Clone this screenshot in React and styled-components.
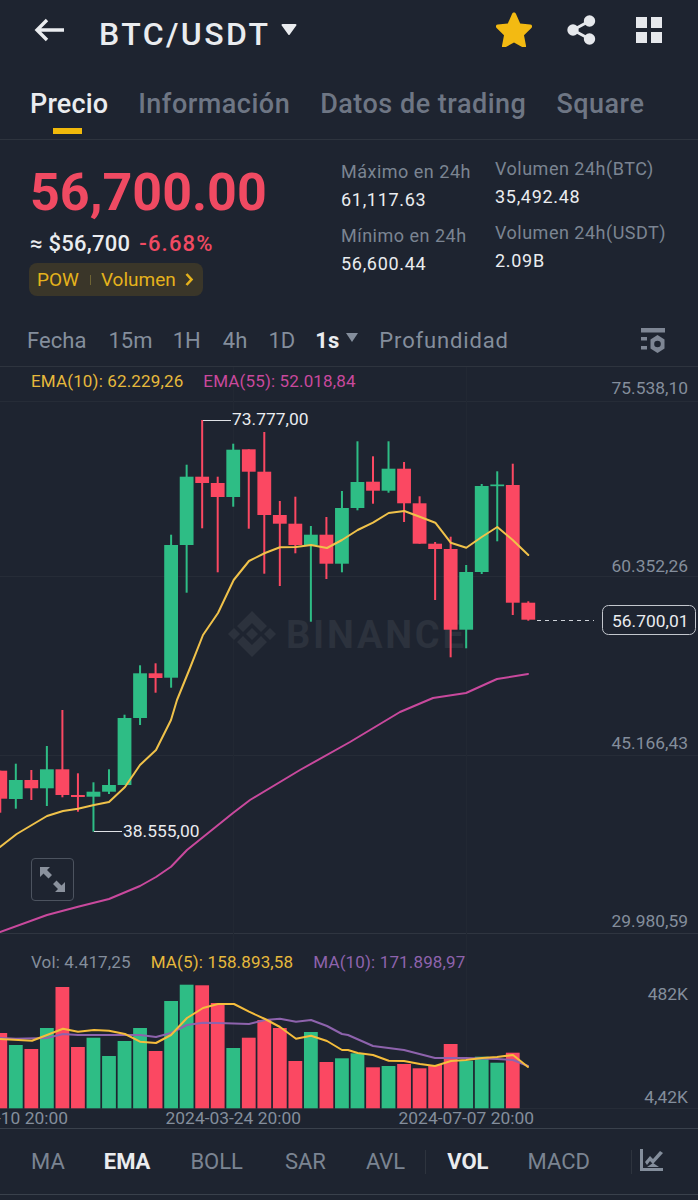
import React from "react";
import styled, { createGlobalStyle } from "styled-components";

const Global = createGlobalStyle`
  html, body { margin: 0; padding: 0; background: #1e2430; }
  * { box-sizing: border-box; }
`;

const GREEN = "#2ebd85";
const RED = "#fb4862";
const YELLOW = "#f0b90b";
const GRAY = "#848e9c";
const BG = "#1e2430";

const Page = styled.div`
  width: 698px; height: 1200px; overflow: hidden; background: ${BG};
  font-family: Roboto, "Noto Sans", sans-serif; color: #eaecef;
  display: flex; flex-direction: column;
`;
const Header = styled.header`
  height: 68px; display: flex; align-items: flex-start; padding: 12px 35px 0 34px;
`;
const BackIcon = styled.svg`width: 30px; height: 24px; margin-top: 6px; margin-right: 35px; flex: none;`;
const Pair = styled.div`
  font-size: 32px; font-weight: 500; letter-spacing: 2.4px; line-height: 42px; margin-top: 1px; color: #eaecef;
`;
const TitleCaret = styled.svg`width: 16px; height: 11px; margin: 12px 0 0 11px; flex: none;`;
const HeaderActions = styled.div`margin-left: auto; display: flex; align-items: flex-start;`;
const StarIcon = styled.svg`width: 36px; height: 35px; flex: none; margin-right: 35px;`;
const ShareIcon = styled.svg`width: 29px; height: 30px; margin-top: 3px; margin-right: 40px; flex: none;`;
const GridIcon = styled.svg`width: 26px; height: 26px; margin-top: 5px; margin-right: 1px; flex: none;`;

const Tabs = styled.nav`
  height: 72px; padding: 1px 0 0 30px; display: flex; gap: 30px;
  border-bottom: 1px solid #2e343e;
  width: 100%;
`;
const Tab = styled.div`
  font-size: 27px; font-weight: 500; line-height: 70px; letter-spacing: ${p => p.$active ? 0.15 : 0.5}px;
  color: ${p => p.$active ? "#eaecef" : "#6e7684"};
  position: relative;
  ${p => p.$active ? `&::after { content: ""; position: absolute; left: 23px; width: 29px; height: 6px; top: 59px; background: ${YELLOW}; }` : ""}
`;

const Summary = styled.section`
  height: 178px; display: flex; padding: 0 0 0 30px;
`;
const PriceBlock = styled.div`width: 311px; flex: none; display: flex; flex-direction: column;`;
const BigPrice = styled.div`
  font-size: 52px; font-weight: 700; line-height: 60px; margin-top: 23px; color: #f04a62; letter-spacing: 0;
`;
const Sub = styled.div`display: flex; gap: 9px; align-items: baseline; margin-top: 7px; line-height: 28px;`;
const Approx = styled.span`font-size: 22px; font-weight: 500; color: #eaecef; letter-spacing: 0.25px;`;
const Change = styled.span`font-size: 22px; font-weight: 500; color: #f04a62; letter-spacing: 1.2px;`;
const Chip = styled.div`
  margin-top: 5px; margin-left: -1px; width: 174px; height: 33px; background: #3a3629; border-radius: 8px;
  display: flex; align-items: center; padding-left: 8px; color: #e5b21c; font-size: 19px;
`;
const ChipSep = styled.i`width: 1px; height: 10px; background: #6f6434; margin: 0 10px 0 11px;`;
const Chevron = styled.svg`width: 9px; height: 13px; margin-left: 9px;`;
const StatCol = styled.div`
  width: ${p => p.$w}px; flex: none; padding-top: ${p => p.$top}px; display: grid; row-gap: 13px; align-content: start;
`;
const Stat = styled.div`display: flex; flex-direction: column; gap: 5px;`;
const StatLabel = styled.div`font-size: 18px; line-height: 23px; color: #7b8492; white-space: nowrap; letter-spacing: 0.5px;`;
const StatValue = styled.div`font-size: 18px; line-height: 23px; color: #eaecef; letter-spacing: 0.7px;`;

const Periods = styled.div`
  height: 49px; flex: none; display: flex; align-items: center; padding: 0 33px 3px 27px;
  border-bottom: 1px solid #2e343e;
`;
const Period = styled.div`
  font-size: 22px; margin-right: ${p => p.$gap}px; color: ${p => p.$active ? "#eaecef" : "#848e9c"};
  font-weight: ${p => p.$active ? 700 : 400}; letter-spacing: ${p => p.$ls || 0.05}px;
`;
const PeriodCaret = styled.svg`width: 12px; height: 9px; margin: -6px 21px 0 -14px;`;
const SettingsIcon = styled.svg`width: 24px; height: 25px; margin-left: auto;`;

const ChartArea = styled.div`position: relative; height: 762px; flex: none; border-bottom: 1px solid #3a414c;`;
const ChartSvg = styled.svg`display: block; width: 698px; height: 761px;`;
const Legend = styled.div`
  position: absolute; left: 31px; top: ${p => p.$top}px; display: flex; gap: 20px;
  font-size: 17px; line-height: 20px; letter-spacing: 0.15px;
`;
const LegendItem = styled.span`color: ${p => p.$c};`;

const ExpandButton = styled.div`
  position: absolute; left: 31px; top: 491px; width: 43px; height: 43px;
  border: 1px solid #4c535f; border-radius: 4px; display: flex; align-items: center; justify-content: center;
`;
const ExpandIcon = styled.svg`width: 27px; height: 27px;`;

const Indicators = styled.div`
  height: 66px; flex: none; display: flex; align-items: center; border-bottom: 1px solid #3a414c;
  padding-left: 31px; font-size: 22px;
`;
const Ind = styled.div`
  color: ${p => p.$active ? "#eaecef" : "#7b8492"};
  font-weight: ${p => p.$active ? 700 : 400};
  margin-right: ${p => p.$gap}px; white-space: nowrap;
`;
const IndSep = styled.i`width: 1px; height: 24px; background: #2e343e; margin-right: ${p => p.$gap}px;`;
const ChartTypeIcon = styled.svg`width: 23px; height: 22px; margin-top: -3px;`;

const Labels = styled.g`font-family: Roboto, sans-serif;`;

const X = i => 528.3 - 15.53 * (34 - i);
/* [isGreen, bodyTop, bodyBottom, wickTop, wickBottom] */
const CANDLES = [
  [0, 770.7, 798.7, 770.7, 812.7], [1, 780, 799, 763.7, 808.7], [0, 780, 788.3, 770, 800],
  [1, 769.3, 788.3, 746, 806], [0, 769.3, 795, 710, 797.3], [0, 795, 797, 773.3, 811.7],
  [1, 791.7, 796.7, 782.3, 831.7], [1, 785, 791.7, 769.3, 794], [1, 718, 785, 714.7, 785],
  [1, 673.3, 718, 665.3, 725], [0, 673.3, 678, 663.3, 692.7], [1, 545, 677.7, 534.7, 687.7],
  [1, 476.7, 545, 464.7, 592.7], [0, 476.7, 483, 420, 528.3], [0, 483, 497, 476.7, 572.3],
  [1, 449.7, 497, 443.7, 506.7], [0, 449.3, 471.7, 449.3, 528.7], [0, 471.7, 515, 432, 573.7],
  [0, 515, 523.7, 501, 586], [0, 523.7, 545, 496.7, 553.3], [1, 534.7, 545, 526, 621.7],
  [0, 534.7, 563.7, 517, 579], [1, 508, 563.7, 491, 572.3], [1, 482, 508, 441.3, 510.3],
  [0, 481.7, 490.7, 456.3, 503.7], [1, 468.7, 490.7, 441.3, 492.7], [0, 468.7, 503.3, 462, 522],
  [0, 503.3, 543.7, 496.3, 543.7], [0, 543.7, 549, 542, 600], [0, 549, 629.7, 536.7, 657.3],
  [1, 572, 629.7, 565, 648.3], [1, 486, 572, 484, 574], [1, 484.5, 486.2, 471.3, 541.3],
  [0, 485, 602.7, 463.7, 615], [0, 602.7, 619.7, 601.3, 620.7],
];
/* [isGreen, top] */
const VOLS = [
  [0, 1033], [1, 1045], [0, 1049], [1, 1028], [0, 987], [0, 1047], [1, 1037.7], [1, 1056], [1, 1041], [1, 1028],
  [0, 1051], [1, 1001], [1, 984.7], [0, 985.3], [0, 1003], [1, 1048], [0, 1037.7], [0, 1020], [0, 1028], [0, 1061],
  [1, 1032], [0, 1062], [1, 1058.3], [1, 1053.3], [0, 1067.3], [1, 1066], [0, 1064], [0, 1068.3], [0, 1065], [0, 1044],
  [1, 1060.7], [1, 1056.7], [1, 1062.7], [0, 1052.7],
];
const EMA10 = "0,847 16.7,834 47,816 63,811 78,808.7 94,805 109,802 125,787 140,765 156,750 171,720 177,700 190,668 203,635 218,613 233.7,580 249,561 265,553 280,547.3 296,547 311,545 327,548 342,540 357.7,530 373,522.7 388.7,513 404.3,511 419.7,516.7 435.3,522.7 450.7,542.7 466.3,547.7 481.7,537 497.3,527 512.7,540 528.3,555";
const EMA55 = "0,932 47,915 78,906.7 109,899 140,886 156,877 171,866.7 187,850 233,813 250,800 300,770 350,742 400,712 433,698 466,693 497,679 528,674";
const MA5 = "0,1039 32,1040.7 47,1035 63,1028.7 78,1031.7 94,1030 109,1030.7 125,1034 140,1041.7 156,1043 171,1035 187,1018 203,1008 218,1004 234,1004 249,1011.7 265,1019 280,1027 296,1038.7 311,1035.7 327,1041 342,1050 348,1050 357.7,1053 373,1055 388.7,1060.7 404,1061 420,1064 435,1066 451,1061 466,1060 482,1058 497,1057 513,1055 528,1067";
const MA10 = "0,1038 16,1038.7 47,1038 63,1034 78,1035 125,1035 140,1035 156,1037 171,1033 187,1025 203,1022.7 218,1023 249,1024 265,1020 280,1018.7 296,1021.7 311,1020 327,1026 342,1034 348,1035 373,1046 404,1050 435,1058 466,1058 497,1059 513,1060 528,1066";

const AXIS = [
  ["75.538,10", 394], ["60.352,26", 572], ["45.166,43", 749], ["29.980,59", 927], ["482K", 1000], ["4,42K", 1103],
];
const TIMES = [["2023-11-10 20:00", 68], ["2024-03-24 20:00", 301], ["2024-07-07 20:00", 534]];

function Candle({ c, i }) {
  const x = X(i);
  const color = c[0] ? GREEN : RED;
  return (
    <g fill={color}>
      <rect x={x - 1} y={c[3]} width={2} height={c[4] - c[3]} />
      <rect x={x - 6.9} y={c[1]} width={13.8} height={c[2] - c[1]} />
    </g>
  );
}

function Chart() {
  return (
    <ChartSvg viewBox="0 367 698 761">
      <g stroke="#262c37" strokeWidth="1">
        <path d="M0 401.5H698M0 576.5H698M0 755.5H698" />
        <path d="M0 933.5H698" stroke="#2f3540" />
        <path d="M0 1108.5H698" />
        <path d="M233.5 367V1108M466.5 367V1108" stroke="#222833" />
      </g>
      <g fill="#2c323d">
        <path d="M252 611l15 15-6 6-9-9-9 9-6-6z" />
        <path d="M252 657l-15-15 6-6 9 9 9-9 6 6z" />
        <path d="M234 628l6 6-6 6-6-6z" />
        <path d="M270 628l6 6-6 6-6-6z" />
        <path d="M252 628l6 6-6 6-6-6z" />
        <text x="286" y="648" fontFamily="Roboto, sans-serif" fontWeight="700" fontSize="38" letterSpacing="2.8">BINANCE</text>
      </g>
      {VOLS.map((v, i) => (
        <rect key={i} x={X(i) - 6.9} y={v[1]} width={13.8} height={1108.3 - v[1]} fill={v[0] ? GREEN : RED} />
      ))}
      {CANDLES.map((c, i) => <Candle key={i} c={c} i={i} />)}
      <g fill="none" strokeLinejoin="round" strokeLinecap="round" strokeWidth="2">
        <polyline points={EMA55} stroke="#c9499d" />
        <polyline points={EMA10} stroke="#f0c24a" />
        <polyline points={MA10} stroke="#8e63ad" />
        <polyline points={MA5} stroke="#f5bd3c" />
      </g>
      <path d="M203 420.5H231" stroke="#dfe2e6" />
      <path d="M94 831.5H122" stroke="#dfe2e6" />
      <path d="M537 620.5H594" stroke="#cfd3d9" strokeDasharray="4 4" />
      <rect x="602.5" y="605.5" width="93" height="29" rx="6" fill={BG} stroke="#c3c7cd" />
      <Labels fontSize="17.4">
        <text x="232" y="425" fill="#eaecef">73.777,00</text>
        <text x="123" y="837" fill="#eaecef">38.555,00</text>
        <text x="612" y="627" fill="#eaecef">56.700,01</text>
        {AXIS.map(([t, y]) => <text key={t} x="688" y={y} textAnchor="end" fill={GRAY}>{t}</text>)}
        {TIMES.map(([t, x]) => <text key={t} x={x} y="1124" textAnchor="end" fill={GRAY}>{t}</text>)}
      </Labels>
    </ChartSvg>
  );
}

export default function App() {
  return (
    <Page>
      <Global />
      <Header>
        <BackIcon viewBox="0 0 30 24" fill="none" stroke="#eaecef" strokeWidth="3.4">
          <path d="M30 12H3M13 2L3 12l10 10" />
        </BackIcon>
        <Pair>BTC/USDT</Pair>
        <TitleCaret viewBox="0 0 16 11"><path d="M1.500 0h13a1 1 0 0 1 .8 1.600L8.800 10.400a1 1 0 0 1-1.600 0L.7 1.600A1 1 0 0 1 1.500 0z" fill="#eaecef" /></TitleCaret>
        <HeaderActions>
          <StarIcon viewBox="0 0 36 35">
            <path d="M18 0.500c.8 0 1.500.5 1.900 1.300l4.300 9.800 10 1c2 .2 2.600 1.900 1.200 3.300l-7.400 7.300 2 10.500c.4 2-1 3-2.700 2L18 30.400l-9.300 5.300c-1.700 1-3.100 0-2.700-2l2-10.500-7.400-7.300c-1.400-1.400-.8-3.100 1.200-3.300l10-1 4.300-9.800c.4-.8 1.100-1.300 1.900-1.300z" fill="#f3ba12" />
          </StarIcon>
          <ShareIcon viewBox="0 0 29 30" fill="#e6e8ec">
            <circle cx="22.500" cy="6" r="5.700" />
            <circle cx="6" cy="15" r="5.700" />
            <circle cx="22.500" cy="24" r="5.700" />
            <path d="M6 15L22.500 6M6 15l16.500 9" stroke="#e6e8ec" strokeWidth="3" />
          </ShareIcon>
          <GridIcon viewBox="0 0 26 26" fill="#e6e8ec">
            <rect x="0" y="0" width="11" height="11" />
            <rect x="15" y="0" width="11" height="11" />
            <rect x="0" y="15" width="11" height="11" />
            <rect x="15" y="15" width="11" height="11" />
          </GridIcon>
        </HeaderActions>
      </Header>

      <Tabs>
        <Tab $active>Precio</Tab>
        <Tab>Información</Tab>
        <Tab>Datos de trading</Tab>
        <Tab>Square</Tab>
      </Tabs>

      <Summary>
        <PriceBlock>
          <BigPrice>56,700.00</BigPrice>
          <Sub>
            <Approx>≈ $56,700</Approx>
            <Change>-6.68%</Change>
          </Sub>
          <Chip>
            POW
            <ChipSep />
            Volumen
            <Chevron viewBox="0 0 9 13" fill="none" stroke="#e5b21c" strokeWidth="2.6"><path d="M1.500 1l5 5.500-5 5.500" /></Chevron>
          </Chip>
        </PriceBlock>
        <StatCol $w={154} $top={20}>
          <Stat><StatLabel>Máximo en 24h</StatLabel><StatValue>61,117.63</StatValue></Stat>
          <Stat><StatLabel>Mínimo en 24h</StatLabel><StatValue>56,600.44</StatValue></Stat>
        </StatCol>
        <StatCol $w={180} $top={17}>
          <Stat><StatLabel>Volumen 24h(BTC)</StatLabel><StatValue>35,492.48</StatValue></Stat>
          <Stat><StatLabel>Volumen 24h(USDT)</StatLabel><StatValue>2.09B</StatValue></Stat>
        </StatCol>
      </Summary>

      <Periods>
        <Period $gap={22}>Fecha</Period>
        <Period $gap={20}>15m</Period>
        <Period $gap={22}>1H</Period>
        <Period $gap={21}>4h</Period>
        <Period $gap={20}>1D</Period>
        <Period $active $gap={21}>1s</Period>
        <PeriodCaret viewBox="0 0 12 9"><path d="M0 0h12L6 9z" fill="#848e9c" /></PeriodCaret>
        <Period $gap={0} $ls={0.85}>Profundidad</Period>
        <SettingsIcon viewBox="0 0 24 25" fill="#7e8694">
          <rect x="0" y="0" width="24" height="4.500" />
          <rect x="0" y="9" width="6" height="3.500" />
          <rect x="0" y="18" width="6" height="3.500" />
          <path d="M16.500 7l7 4.500v9l-7 4.500-7-4.500v-9z" />
          <circle cx="16.500" cy="16" r="3.300" fill={BG} />
        </SettingsIcon>
      </Periods>

      <ChartArea>
        <Chart />
        <Legend $top={4}>
          <LegendItem $c="#e6b93c">EMA(10): 62.229,26</LegendItem>
          <LegendItem $c="#c9499d">EMA(55): 52.018,84</LegendItem>
        </Legend>
        <Legend $top={585}>
          <LegendItem $c="#848e9c">Vol: 4.417,25</LegendItem>
          <LegendItem $c="#e6b93c">MA(5): 158.893,58</LegendItem>
          <LegendItem $c="#8e63ad">MA(10): 171.898,97</LegendItem>
        </Legend>
        <ExpandButton>
          <ExpandIcon viewBox="0 0 27 27" fill="#8a919d">
            <path d="M1 1h10L8 4l5 5-3.500 3.500-5-5L1 11z" />
            <path d="M26 26H16l3-3-5-5 3.500-3.500 5 5 3.500-3.500z" />
          </ExpandIcon>
        </ExpandButton>
      </ChartArea>

      <Indicators>
        <Ind $gap={39}>MA</Ind>
        <Ind $active $gap={40}>EMA</Ind>
        <Ind $gap={42}>BOLL</Ind>
        <Ind $gap={40}>SAR</Ind>
        <Ind $gap={20}>AVL</Ind>
        <IndSep $gap={21} />
        <Ind $active $gap={39}>VOL</Ind>
        <Ind $gap={41}>MACD</Ind>
        <IndSep $gap={8} />
        <ChartTypeIcon viewBox="0 0 23 22" fill="#848e9c">
          <path d="M0 0h3v19h20v3H0z" />
          <path d="M5 13l5-6 3 3 7-8 3 2-10 11-3-3-3 4z" />
          <path d="M7 18l6-4 6 4z" />
        </ChartTypeIcon>
      </Indicators>
    </Page>
  );
}
